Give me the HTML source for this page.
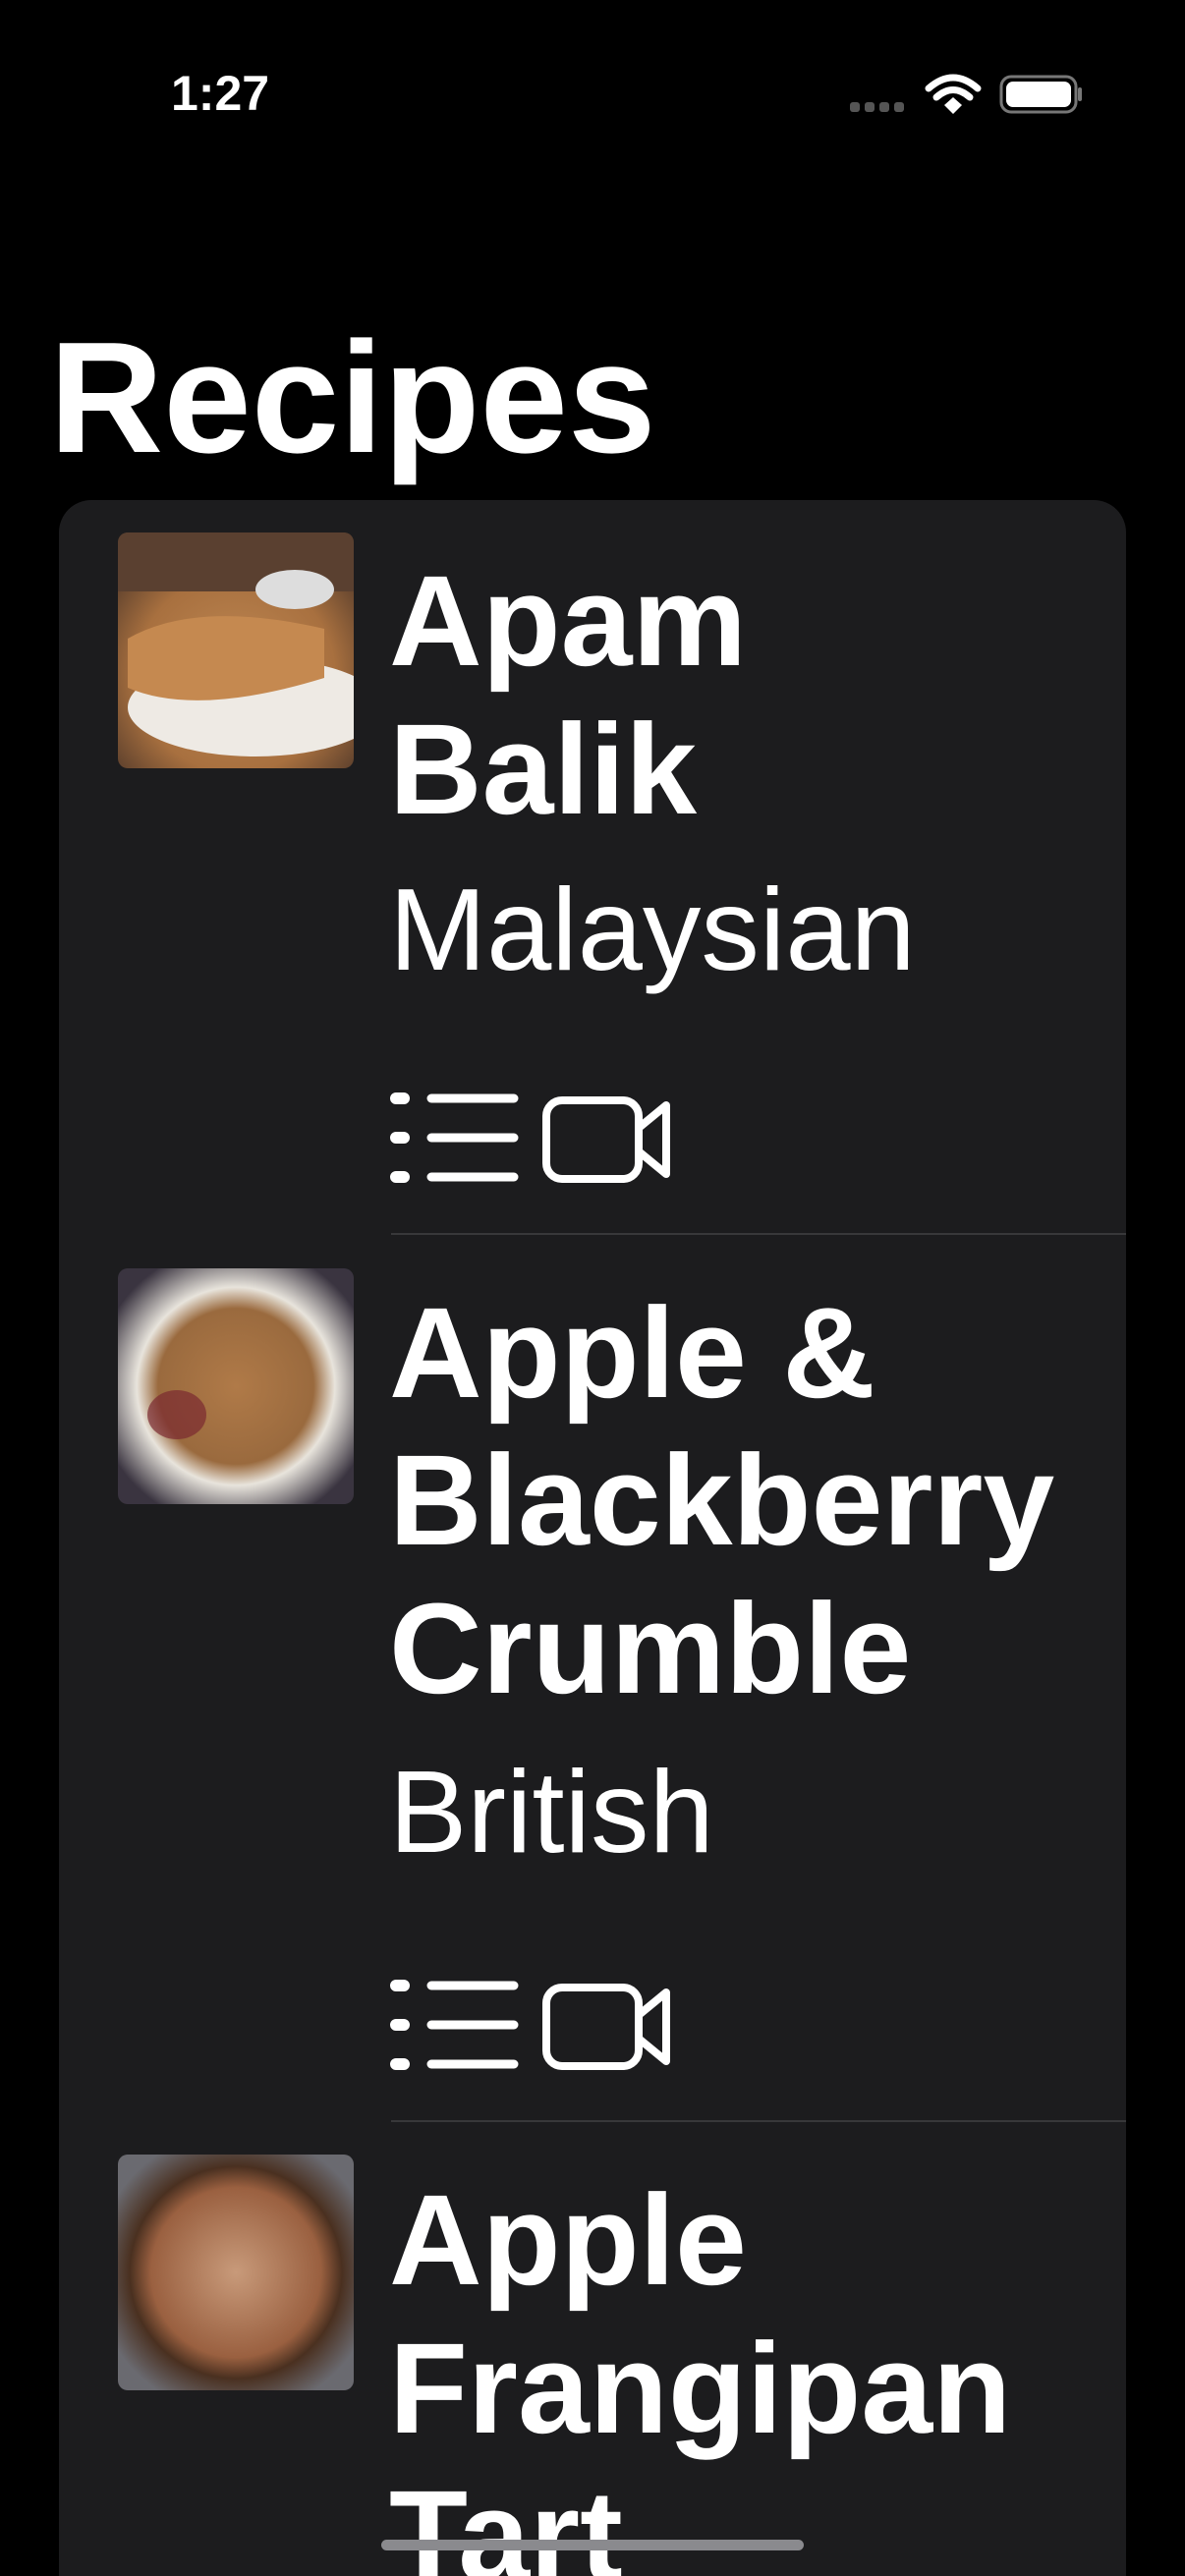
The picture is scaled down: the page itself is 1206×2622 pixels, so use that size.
<!DOCTYPE html>
<html><head><meta charset="utf-8"><style>html,body{margin:0;padding:0;background:#000;width:1206px;height:2622px;overflow:hidden}svg{display:block}</style></head><body>
<svg width="1206" height="2622" viewBox="0 0 1206 2622" xmlns="http://www.w3.org/2000/svg" font-family="Liberation Sans, sans-serif">
<defs>
<radialGradient id="g1" cx="0.5" cy="0.6" r="0.7"><stop offset="0" stop-color="#c08a55"/><stop offset="0.6" stop-color="#a8703f"/><stop offset="1" stop-color="#4a3428"/></radialGradient>
<radialGradient id="g2" cx="0.5" cy="0.5" r="0.6"><stop offset="0" stop-color="#b07a48"/><stop offset="0.55" stop-color="#9a6a3e"/><stop offset="0.7" stop-color="#e8e4dc"/><stop offset="1" stop-color="#3a3440"/></radialGradient>
<radialGradient id="g3" cx="0.5" cy="0.5" r="0.6"><stop offset="0" stop-color="#c89a7a"/><stop offset="0.6" stop-color="#9a6040"/><stop offset="0.75" stop-color="#4a3020"/><stop offset="1" stop-color="#6a6a70"/></radialGradient>
<clipPath id="c1"><rect x="120" y="542" width="240" height="240" rx="10"/></clipPath>
<clipPath id="c2"><rect x="120" y="1291" width="240" height="240" rx="10"/></clipPath>
<clipPath id="c3"><rect x="120" y="2193" width="240" height="240" rx="10"/></clipPath>
</defs>
<rect width="1206" height="2622" fill="#000"/>
<text x="174" y="112" fill="#fff" font-size="50" font-weight="bold">1:27</text>
<g fill="#555"><rect x="865" y="104" width="10" height="10" rx="3"/><rect x="880" y="104" width="10" height="10" rx="3"/><rect x="895" y="104" width="10" height="10" rx="3"/><rect x="910" y="104" width="10" height="10" rx="3"/></g>
<g fill="none" stroke="#fff" stroke-width="7" stroke-linecap="round"><path d="M945 90 Q970 68 995 90"/><path d="M953 99 Q970 84 987 99"/></g>
<path d="M961 107 L970 99 L979 107 L970 116Z" fill="#fff"/>
<rect x="1019" y="78" width="76" height="36" rx="10" fill="none" stroke="#777" stroke-width="3"/>
<rect x="1024" y="83" width="66" height="26" rx="7" fill="#fff"/>
<rect x="1097" y="89" width="4" height="14" rx="2" fill="#777"/>
<text x="50" y="460" fill="#fff" font-size="161" font-weight="bold">Recipes</text>
<rect x="60" y="509" width="1086" height="2200" rx="33" fill="#1c1c1e"/>
<g clip-path="url(#c1)"><rect x="120" y="542" width="240" height="240" fill="url(#g1)"/><rect x="120" y="542" width="240" height="60" fill="#5a4030"/><ellipse cx="260" cy="720" rx="130" ry="50" fill="#eeeae4"/><path d="M130 650 Q200 610 330 640 L330 690 Q200 730 130 700Z" fill="#c58950"/><ellipse cx="300" cy="600" rx="40" ry="20" fill="#ddd"/></g>
<g clip-path="url(#c2)"><rect x="120" y="1291" width="240" height="240" fill="url(#g2)"/><ellipse cx="180" cy="1440" rx="30" ry="25" fill="#7a2a30" opacity="0.7"/></g>
<g clip-path="url(#c3)"><rect x="120" y="2193" width="240" height="240" fill="url(#g3)"/></g>
<g fill="#fff" font-weight="bold" font-size="131">
<text x="396" y="677">Apam</text><text x="396" y="828">Balik</text>
<text x="396" y="1422">Apple &amp;</text><text x="396" y="1572">Blackberry</text><text x="396" y="1723">Crumble</text>
<text x="396" y="2325">Apple</text><text x="396" y="2476">Frangipan</text><text x="396" y="2626">Tart</text>
</g>
<g fill="#fff" font-size="119"><text x="396" y="987">Malaysian</text><text x="396" y="1885">British</text></g>
<g id="ic1" fill="none" stroke="#fff" stroke-linecap="round">
<g stroke-width="12"><path d="M403 1118h8M403 1158h8M403 1198h8"/></g>
<g stroke-width="9"><path d="M439 1118h84M439 1158h84M439 1198h84"/></g>
<rect x="556" y="1120" width="94" height="80" rx="16" stroke-width="8"/>
<path d="M650 1148 L678 1125 L678 1195 L650 1172" stroke-width="8" stroke-linejoin="round"/>
</g>
<use href="#ic1" y="903"/>
<rect x="398" y="1255" width="748" height="2" fill="#38383a"/>
<rect x="398" y="2158" width="748" height="2" fill="#38383a"/>
<rect x="388" y="2585" width="430" height="11" rx="5.5" fill="#8a8a8e"/>
</svg>
</body></html>
